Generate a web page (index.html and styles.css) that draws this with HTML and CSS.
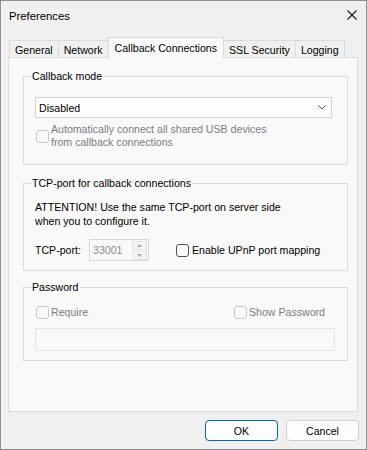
FILE: index.html
```html
<!DOCTYPE html>
<html>
<head>
<meta charset="utf-8">
<link rel="stylesheet" href="styles.css">
</head>
<body>
<div class="window">
  <div class="titlebar">
    <span class="title">Preferences</span>
    <svg class="close" width="10" height="10" viewBox="0 0 10 10"><path d="M0.5 0.5 L9.5 9.5 M9.5 0.5 L0.5 9.5" stroke="#1a1a1a" stroke-width="1.1" fill="none"/></svg>
  </div>
  <div class="tabs">
    <div class="tab">General</div>
    <div class="tab">Network</div>
    <div class="tab active">Callback Connections</div>
    <div class="tab">SSL Security</div>
    <div class="tab">Logging</div>
  </div>
  <div class="panel">
    <fieldset class="group group-mode">
      <legend>Callback mode</legend>
      <div class="select">
        <span>Disabled</span>
        <svg width="8" height="5" viewBox="0 0 8 5"><path d="M0.5 0.5 L4 4 L7.5 0.5" stroke="#555" stroke-width="1" fill="none"/></svg>
      </div>
      <div class="check check-multi disabled">
        <span class="box"></span>
        <span class="check-text">Automatically connect all shared USB devices<br>from callback connections</span>
      </div>
    </fieldset>
    <fieldset class="group group-port">
      <legend>TCP-port for callback connections</legend>
      <p class="note">ATTENTION! Use the same TCP-port on server side<br>when you to configure it.</p>
      <div class="port-row">
        <span class="port-label">TCP-port:</span>
        <div class="spin">
          <span class="spin-value">33001</span>
          <div class="spin-buttons">
            <span class="spin-btn"><svg width="5" height="3" viewBox="0 0 5 3"><path d="M0 3 L2.5 0 L5 3 Z" fill="#a8a8a8"/></svg></span>
            <span class="spin-btn"><svg width="5" height="3" viewBox="0 0 5 3"><path d="M0 0 L2.5 3 L5 0 Z" fill="#a8a8a8"/></svg></span>
          </div>
        </div>
        <div class="check check-upnp">
          <span class="box box-enabled"></span>
          <span class="check-text">Enable UPnP port mapping</span>
        </div>
      </div>
    </fieldset>
    <fieldset class="group group-pass">
      <legend>Password</legend>
      <div class="pass-row">
        <div class="check disabled">
          <span class="box"></span>
          <span class="check-text">Require</span>
        </div>
        <div class="check disabled">
          <span class="box"></span>
          <span class="check-text">Show Password</span>
        </div>
      </div>
      <div class="textfield"></div>
    </fieldset>
  </div>
  <div class="footer">
    <div class="btn btn-primary">OK</div>
    <div class="btn">Cancel</div>
  </div>
</div>
</body>
</html>
```
FILE: styles.css
```css
* { box-sizing: border-box; }
html, body { margin: 0; padding: 0; }
body {
  font-family: "Liberation Sans", Arial, sans-serif;
  font-size: 10.6px;
  color: #000;
  background: #f0f0f0;
}
.window {
  width: 367px;
  height: 450px;
  border: 1px solid #8f8f8f;
  background: #f0f0f0;
  display: flex;
  flex-direction: column;
}
.titlebar {
  height: 29px;
  display: flex;
  align-items: center;
  justify-content: space-between;
  padding: 0 9px 0 8px;
}
.title { font-size: 11.3px; }
.close { margin-top: -1px; }

.tabs {
  margin-top: 7px;
  height: 20px;
  padding-left: 8px;
  display: flex;
  align-items: flex-end;
}
.tab {
  height: 17px;
  padding: 2px 5px 0;
  border: 1px solid #dadada;
  border-bottom: none;
  margin-left: -1px;
  background: #f0f0f0;
  display: flex;
  align-items: center;
  white-space: nowrap;
}
.tab:first-child { margin-left: 0; }
.tab.active {
  height: 21px;
  padding: 0 6px;
  margin-bottom: -1px;
  background: #f9f9f9;
  position: relative;
  z-index: 1;
}

.panel {
  margin: 0 8px 0 7px;
  height: 355px;
  border: 1px solid #dcdcdc;
  background: #f9f9f9;
  padding: 11px 11px 0 14px;
}

.group {
  width: 325px;
  margin: 0;
  border: 1px solid #dcdcdc;
  min-inline-size: 0;
}
.group legend {
  margin-left: -4px;
  padding: 0 1px;
  line-height: 14px;
}
.group-mode { padding: 14px 14px 15px 11px; }
.group-port { margin-top: 11px; padding: 10px 14px 9px 11px; }
.group-pass { margin-top: 9px; padding: 11px 11px 9px 11px; }

.select {
  width: 297px;
  height: 21px;
  border: 1px solid #d3d3d3;
  background: #fdfdfd;
  display: flex;
  align-items: center;
  justify-content: space-between;
  padding: 0 5px 0 3px;
}

.check {
  display: flex;
  align-items: center;
  line-height: 14px;
  white-space: nowrap;
}
.check .box {
  width: 13px;
  height: 13px;
  border: 1px solid #c9c9c9;
  border-radius: 3px;
  margin-left: 1px;
  margin-right: 2px;
  flex: none;
}
.check.disabled .check-text { color: #7c7c7c; }
.check-multi { margin-top: 5px; }
.check-multi .check-text { line-height: 13px; }

.note { margin: 0; line-height: 14px; }

.port-row {
  margin-top: 11px;
  height: 22px;
  display: flex;
  align-items: center;
}
.port-label { width: 54px; }
.spin {
  width: 60px;
  height: 22px;
  border: 1px solid #d6d6d6;
  background: #f9f9f9;
  display: flex;
  align-items: center;
  padding-right: 1px;
}
.spin-value { flex: 1; padding-left: 3px; color: #8c8c8c; }
.spin-buttons {
  width: 15px;
  display: flex;
  flex-direction: column;
  gap: 1px;
}
.spin-btn {
  height: 9px;
  border: 1px solid #e3e3e3;
  background: #f4f4f4;
  display: flex;
  align-items: center;
  justify-content: center;
}
.check-upnp { margin-left: 27px; }
.check-upnp .box { margin-left: 0; margin-right: 3px; }
.box-enabled { border-color: #505050 !important; background: #fbfbfb; }

.pass-row {
  display: grid;
  grid-template-columns: 198px 1fr;
}
.textfield {
  margin-top: 9px;
  width: 300px;
  height: 23px;
  border: 1px solid #e4e4e4;
  background: #f9f9f9;
}

.footer {
  margin-top: 8px;
  display: flex;
  justify-content: flex-end;
  gap: 8px;
  padding-right: 7px;
}
.btn {
  width: 73px;
  height: 21px;
  border: 1px solid #d0d0d0;
  border-radius: 4px;
  background: #fdfdfd;
  display: flex;
  align-items: center;
  justify-content: center;
}
.btn-primary { border-color: #0067c0; }
```
